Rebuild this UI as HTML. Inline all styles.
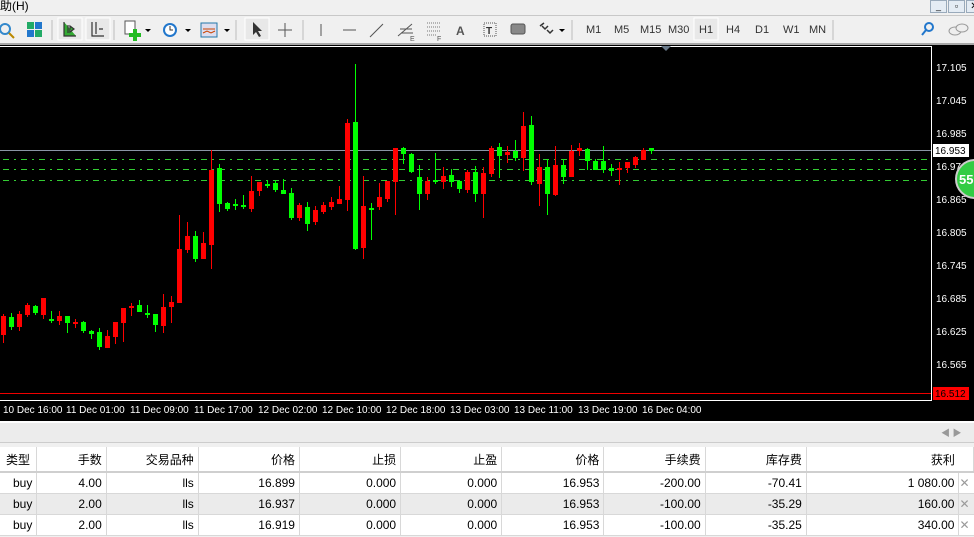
<!DOCTYPE html>
<html><head><meta charset="utf-8"><style>
*{margin:0;padding:0;box-sizing:border-box}
body{width:974px;height:537px;overflow:hidden;background:#f0f0f0;font-family:"Liberation Sans","Noto Sans CJK SC",sans-serif;position:relative}
.abs{position:absolute}
.tb{font-size:11px;color:#333}
table{border-collapse:collapse;position:absolute;left:0;top:447px;width:974px;font-size:12px;color:#000}
td{height:21px;text-align:right;padding-right:4px;border-right:1px solid #d8d8d8;border-bottom:1px solid #d8d8d8;font-family:"Liberation Sans Narrow","Liberation Sans","Noto Sans CJK SC",sans-serif}
tr.h td{height:25px;background:#fff;border-bottom:2px solid #cfcfcf}
tr.g td{background:#ebebeb}
tr.w td{background:#fff}
</style></head><body>
<div class="abs" style="left:0;top:0;width:974px;height:15px;background:#f0f0f0;font-size:12px;line-height:13px">助(H)</div>
<div class="abs" style="left:919px;top:0;width:55px;height:13px">
<div class="abs" style="left:11px;top:0;width:17px;height:13px;border:1px solid #9ab;background:#e4ecf4;font-size:9px;text-align:center">_</div>
<div class="abs" style="left:29px;top:0;width:17px;height:13px;border:1px solid #9ab;background:#e4ecf4;font-size:9px;text-align:center">▫</div>
<div class="abs" style="left:47px;top:0;width:17px;height:13px;border:1px solid #9ab;background:#e4ecf4;font-size:10px;text-align:center">✕</div>
</div>
<div class="abs" style="left:0;top:15px;width:974px;height:1px;background:#c8c8c8"></div>
<svg class="abs" style="left:0;top:16px" width="974" height="28">
<circle cx="5" cy="13" r="5" fill="none" stroke="#38c" stroke-width="2"/><line x1="9" y1="17" x2="14" y2="22" stroke="#b80" stroke-width="2"/>
<rect x="27" y="6" width="7" height="7" fill="#2a6"/><rect x="35" y="6" width="7" height="7" fill="#27c"/><rect x="27" y="14" width="7" height="7" fill="#27c"/><rect x="35" y="14" width="7" height="7" fill="#2a6"/>
<line x1="52" y1="4" x2="52" y2="24" stroke="#bbb"/>
<rect x="58" y="2" width="24" height="22" fill="#e8e8e8" stroke="#fff"/><rect x="86" y="2" width="24" height="22" fill="#e8e8e8" stroke="#fff"/>
<path d="M64 6v14h12M68 9v8M70 10l4 3-4 3z" stroke="#333" fill="#3a3" stroke-width="1.2"/>
<path d="M92 6v14h12M96 6v12M103 13h-4" stroke="#333" fill="none" stroke-width="1.2"/>
<line x1="114" y1="4" x2="114" y2="24" stroke="#bbb"/>
<rect x="125" y="5" width="10" height="13" fill="#fff" stroke="#555"/><path d="M133 13h4v4h4v4h-4v4h-4v-4h-4v-4h4z" fill="#2b2"/>
<path d="M145 13l3 3 3-3z" fill="#000"/>
<circle cx="170" cy="14" r="7" fill="#27c"/><circle cx="170" cy="14" r="5" fill="#fff"/><path d="M170 10v4h3" stroke="#333" fill="none"/>
<path d="M185 13l3 3 3-3z" fill="#000"/>
<rect x="201" y="7" width="16" height="14" fill="#dde" stroke="#27a"/><path d="M203 13h12M203 17l4-2 4 2 4-2" stroke="#c40" fill="none"/>
<path d="M224 13l3 3 3-3z" fill="#000"/>
<line x1="236" y1="4" x2="236" y2="24" stroke="#bbb"/>
<rect x="245" y="2" width="24" height="22" fill="#e8e8e8" stroke="#fff"/><path d="M253 6v13l3-3 3 5 2-1-3-5h4z" fill="#333"/>
<path d="M285 7v14M278 14h14" stroke="#555"/>
<line x1="303" y1="4" x2="303" y2="24" stroke="#bbb"/>
<path d="M321 8v12M343 14h13M370 21l13-13" stroke="#555"/>
<path d="M398 20l14-12M401 17h12M400 13h12" stroke="#555"/><text x="410" y="25" font-size="7" fill="#555">E</text>
<path d="M427 7h14M427 11h14M427 15h14M427 19h10" stroke="#777" stroke-dasharray="1 1"/><text x="437" y="25" font-size="7" fill="#555">F</text>
<text x="456" y="19" font-size="12" font-weight="bold" fill="#555">A</text>
<rect x="484" y="7" width="12" height="13" fill="none" stroke="#555" stroke-dasharray="1 1"/><text x="486" y="18" font-size="10" font-weight="bold" fill="#333">T</text>
<rect x="511" y="8" width="14" height="10" rx="2" fill="#888" stroke="#555"/>
<path d="M540 10l4-3M542 10l3 3l3-3M547 14l3 3 3-3" stroke="#333" fill="none" stroke-width="1.5"/>
<path d="M559 13l3 3 3-3z" fill="#000"/>
<line x1="572" y1="4" x2="572" y2="24" stroke="#bbb"/>
<rect x="694" y="2" width="24" height="22" fill="#e8e8e8" stroke="#fff"/>
<line x1="833" y1="4" x2="833" y2="24" stroke="#bbb"/>
<circle cx="929" cy="11" r="4" fill="none" stroke="#27c" stroke-width="2"/><line x1="926" y1="14" x2="922" y2="19" stroke="#27c" stroke-width="2"/>
<ellipse cx="955" cy="15" rx="6" ry="4" fill="#eee" stroke="#999"/><ellipse cx="962" cy="12" rx="6" ry="4" fill="#eee" stroke="#999"/>
</svg>
<div class="abs tb" style="left:586px;top:24px">M1</div><div class="abs tb" style="left:614px;top:24px">M5</div><div class="abs tb" style="left:640px;top:24px">M15</div><div class="abs tb" style="left:668px;top:24px">M30</div><div class="abs tb" style="left:699px;top:24px">H1</div><div class="abs tb" style="left:726px;top:24px">H4</div><div class="abs tb" style="left:755px;top:24px">D1</div><div class="abs tb" style="left:783px;top:24px">W1</div><div class="abs tb" style="left:809px;top:24px">MN</div>
<div class="abs" style="left:0;top:43px;width:974px;height:2px;background:#a8a8a8"></div>
<svg class="abs" style="left:0;top:45px" width="974" height="377" id="ch">
<rect width="974" height="377" fill="#000"/>
<g transform="translate(0,-45)" id="g">
<line x1="0" y1="46.5" x2="932" y2="46.5" stroke="#fff"/>
<line x1="931.5" y1="46" x2="931.5" y2="401" stroke="#fff"/>
<line x1="0" y1="400.5" x2="932" y2="400.5" stroke="#fff"/>
<path d="M661 46l5 5 5-5z" fill="#6a7a8a"/>
<line x1="0" y1="150.5" x2="931" y2="150.5" stroke="#8a94a4"/>
<g stroke="#3c3" stroke-dasharray="6 5 2 5"><line x1="3" y1="159.5" x2="931" y2="159.5"/><line x1="3" y1="169.5" x2="931" y2="169.5"/><line x1="3" y1="180.5" x2="931" y2="180.5"/></g>
<line x1="0" y1="393.5" x2="931" y2="393.5" stroke="#e00"/>
<g font-size="10" fill="#fff" font-family="Liberation Sans Narrow,Liberation Sans,sans-serif">
<text x="936" y="71">17.105</text><text x="936" y="104">17.045</text><text x="936" y="137">16.985</text><text x="936" y="170">16.97</text><text x="936" y="203">16.865</text><text x="936" y="236">16.805</text><text x="936" y="269">16.745</text><text x="936" y="302">16.685</text><text x="936" y="335">16.625</text><text x="936" y="368">16.565</text>
</g>
<rect x="933" y="144" width="36" height="13" fill="#fff"/><text x="935" y="154" font-size="10" fill="#000">16.953</text>
<rect x="933" y="387" width="36" height="13" fill="#f00"/><text x="935" y="397" font-size="10" fill="#000">16.512</text>
<circle cx="975" cy="179" r="19" fill="#3c4" stroke="#ccc" stroke-width="2"/><text x="959" y="184" font-size="13" font-weight="bold" fill="#fff">55</text>
<g font-size="10" fill="#fff" font-family="Liberation Sans Narrow,Liberation Sans,sans-serif">
<text x="3" y="413">10 Dec 16:00</text><text x="66" y="413">11 Dec 01:00</text><text x="130" y="413">11 Dec 09:00</text><text x="194" y="413">11 Dec 17:00</text><text x="258" y="413">12 Dec 02:00</text><text x="322" y="413">12 Dec 10:00</text><text x="386" y="413">12 Dec 18:00</text><text x="450" y="413">13 Dec 03:00</text><text x="514" y="413">13 Dec 11:00</text><text x="578" y="413">13 Dec 19:00</text><text x="642" y="413">16 Dec 04:00</text>
</g>
</g>
</svg>
<script>
var d=[["r",316,335,314,343],["g",317,327,313,330],["r",314,327,311,331],["r",305,315,303,317],["g",306,313,305,315],["r",298,315,298,319],["g",319,320,311,323],["r",316,321,311,325],["g",316,323,316,333],["r",322,323,319,328],["g",322,331,321,333],["g",331,334,330,339],["g",332,347,328,350],["r",336,348,330,348],["r",322,337,322,344],["r",308,323,308,342],["r",306,308,303,316],["g",305,312,300,312],["g",313,314,305,318],["g",314,325,314,332],["r",307,326,294,333],["r",302,307,296,323],["r",249,303,215,303],["r",236,250,222,253],["g",236,259,231,262],["r",243,259,232,259],["r",170,245,150,269],["g",168,204,164,212],["g",203,209,202,211],["g",204,205,199,210],["g",205,207,195,209],["r",191,209,176,212],["r",182,191,182,196],["g",184,185,180,188],["g",183,190,180,192],["g",190,194,179,194],["g",193,218,188,220],["r",205,218,203,221],["g",207,224,202,231],["r",210,222,206,225],["r",205,212,202,214],["r",202,207,197,210],["r",199,204,186,204],["r",123,200,119,211],["g",122,249,64,250],["r",206,248,176,259],["g",208,209,203,240],["r",197,207,183,210],["r",181,199,181,202],["r",148,182,148,215],["g",148,154,147,164],["g",154,172,153,173],["g",177,194,165,210],["r",181,194,177,200],["g",180,181,153,184],["r",176,182,167,189],["g",175,182,169,187],["g",181,189,180,193],["r",172,190,170,193],["g",172,194,166,202],["r",173,194,167,218],["r",148,174,146,177],["g",147,156,143,178],["r",152,155,146,163],["g",151,158,140,161],["r",126,158,112,171],["g",125,182,116,185],["r",167,184,154,206],["g",167,194,159,215],["r",165,195,146,196],["g",165,177,159,184],["r",151,177,145,177],["r",148,151,143,156],["g",149,161,148,170],["g",161,170,159,170],["g",161,170,146,173],["g",168,171,164,176],["r",168,169,162,185],["r",162,168,162,173],["r",157,165,156,168],["r",150,160,148,160],["g",148,151,148,154]];
var g=document.getElementById("g"),s="";
d.forEach(function(c,i){var x=3+8*i,col=c[0]=="r"?"#f00":"#0f0";
s+='<line x1="'+(x+.5)+'" y1="'+c[3]+'" x2="'+(x+.5)+'" y2="'+c[4]+'" stroke="'+col+'"/>';
s+='<rect x="'+(x-2)+'" y="'+c[1]+'" width="5" height="'+Math.max(2,c[2]-c[1])+'" fill="'+col+'"/>';});
g.insertAdjacentHTML("beforeend",s);
</script>
<div class="abs" style="left:0;top:421px;width:974px;height:2px;background:#fff"></div>
<div class="abs" style="left:0;top:423px;width:974px;height:20px;background:#ececec;border-bottom:1px solid #ccc"></div>
<div class="abs" style="left:941px;top:426px;font-size:9px;color:#999">◀ ▶</div>
<table>
<tr class="h"><td style="width:37px;text-align:left;padding-left:6px">类型</td><td style="width:70px">手数</td><td style="width:93px">交易品种</td><td style="width:102px">价格</td><td style="width:102px">止损</td><td style="width:102px">止盈</td><td style="width:103px">价格</td><td style="width:102px">手续费</td><td style="width:102px">库存费</td><td style="width:154px;border-right:none">获利</td><td></td></tr>
<tr class="w"><td>buy</td><td>4.00</td><td>lls</td><td>16.899</td><td>0.000</td><td>0.000</td><td>16.953</td><td>-200.00</td><td>-70.41</td><td>1 080.00</td><td style="color:#999;text-align:center;border-right:none">✕</td></tr>
<tr class="g"><td>buy</td><td>2.00</td><td>lls</td><td>16.937</td><td>0.000</td><td>0.000</td><td>16.953</td><td>-100.00</td><td>-35.29</td><td>160.00</td><td style="color:#999;text-align:center;border-right:none">✕</td></tr>
<tr class="w"><td>buy</td><td>2.00</td><td>lls</td><td>16.919</td><td>0.000</td><td>0.000</td><td>16.953</td><td>-100.00</td><td>-35.25</td><td>340.00</td><td style="color:#999;text-align:center;border-right:none">✕</td></tr>
</table>
</body></html>
